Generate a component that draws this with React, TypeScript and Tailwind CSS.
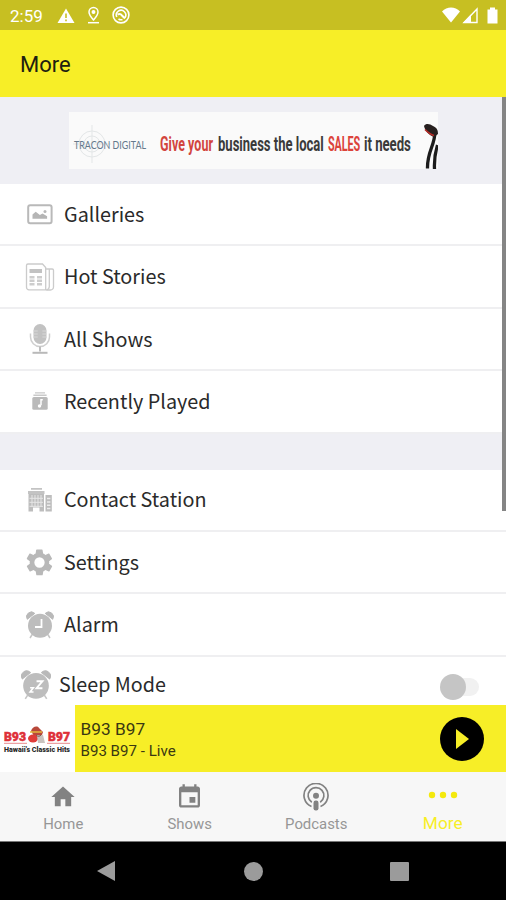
import type { ReactNode } from "react";

const GREY = "#bdbdbd";

function GalleryIcon() {
    return (
        <svg width="26" height="22" viewBox="0 0 26 22" fill="none">
            <rect x="1.2" y="2.2" width="23.4" height="18" rx="2" stroke="#b9b9b9" strokeWidth="2" />
            <path d="M5.5 15.8v-4.2l3.2-2.8 4.2 3.2 2.6-1.4 4.6 2.6v2.6z" fill="#b5b5b5" />
            <circle cx="18" cy="8.4" r="1.5" fill="#b9b9b9" />
        </svg>
    );
}

function NewsIcon() {
    return (
        <svg width="30" height="30" viewBox="0 0 30 30" fill="none" stroke="#cbcbcb" strokeWidth="1.3">
            <path d="M3 2h14.5l3.2 3.5v22.3H4a2.5 2.5 0 0 1-2.5-2.5V3.5A1.5 1.5 0 0 1 3 2z" />
            <path d="M20.7 7h6.5a1.3 1.3 0 0 1 1.3 1.3V25a3 3 0 0 1-3 3h-4.2" />
            <path d="M24.3 7v17.5a3.5 3.5 0 0 1-3 3.4" />
            <path d="M4.5 7H17v4H4.5z" fill="#c2c2c2" stroke="none" />
            <path d="M4.5 15.2h5M4.5 18.700h5M4.5 22.200h5M12 15.200h5M12 18.700h5M12 22.200h5" strokeWidth="2.5" stroke="#cdcdcd" />
        </svg>
    );
}

function MicIcon() {
    return (
        <svg width="22" height="32" viewBox="0 0 22 32" fill="none">
            <rect x="4.5" y="1" width="13" height="20" rx="6.5" fill="#c2c2c2" />
            <path d="M4.5 8h4.2M13.3 8h4.2M4.5 11h4.2M13.3 11h4.2M4.5 14h4.2M13.3 14h4.2" stroke="#d8d8d8" />
            <path d="M1.5 10.5v3.5a9.5 9.5 0 0 0 19 0v-3.5" stroke="#cfcfcf" strokeWidth="1.5" />
            <path d="M11 23.5v5" stroke={GREY} strokeWidth="2" />
            <path d="M3.5 29.8h15" stroke="#b9b9b9" strokeWidth="2" />
        </svg>
    );
}

function RecentIcon() {
    return (
        <svg width="16" height="18" viewBox="0 0 16 18">
            <path d="M3 .3h10v1.3H3zM1.4 2.6h13.2v1.5H1.4z" fill="#c9c9c9" />
            <rect x=".3" y="5" width="15.4" height="12.8" rx="1.5" fill="#bababa" />
            <path d="M10.8 7.8H9v5.5" stroke="#fff" strokeWidth="1.5" fill="none" />
            <circle cx="7.5" cy="14" r="1.7" fill="#fff" />
        </svg>
    );
}

function BuildingIcon() {
    return (
        <svg width="26" height="24" viewBox="0 0 26 24">
            <path d="M4 0h11v1.8H4zM1 3h16.5v3H1z" fill="#c3c3c3" />
            <path d="M1.5 6h15.5v17.5h-4.5V19.5H6v4H1.5z" fill={GREY} />
            <path d="M5 7v12M8 7v12M11 7v12M14 7v12M2.5 10.3h13.5M2.5 14.3h13.5M2.5 18.3h13.5" stroke="#e6e6e6" />
            <path d="M18.5 7h6.3v16.5h-6.3z" fill={GREY} />
            <path d="M20 10.5h3.4M20 14h3.4M20 17.3h3.4M20 20.5h3.4" stroke="#ececec" strokeWidth="1.4" />
        </svg>
    );
}

function GearIcon() {
    return (
        <svg width="31" height="31" viewBox="0 0 24 24" fill="#b8b8b8">
            <path d="M19.4 13c0-.3.1-.6.1-1s0-.7-.1-1l2.1-1.6c.2-.2.3-.4.1-.7l-2-3.4c-.1-.2-.4-.3-.6-.2l-2.5 1c-.5-.4-1.1-.7-1.7-1l-.4-2.6c0-.3-.2-.5-.5-.5h-4c-.2 0-.5.2-.5.4L9 5.1c-.6.2-1.1.6-1.7 1l-2.5-1c-.2-.1-.5 0-.6.2l-2 3.4c-.1.3 0 .5.2.7L4.5 11c0 .3-.1.7-.1 1s0 .7.1 1l-2.1 1.6c-.2.2-.3.4-.1.7l2 3.4c.1.2.4.3.6.2l2.5-1c.5.4 1.1.7 1.7 1l.4 2.6c0 .3.2.4.5.4h4c.3 0 .5-.1.5-.4l.4-2.6c.6-.3 1.2-.6 1.7-1l2.5 1c.2.1.5 0 .6-.2l2-3.4c.1-.2.1-.5-.1-.7zM12 16a4 4 0 1 1 0-8 4 4 0 0 1 0 8z" />
        </svg>
    );
}

function ClockIcon({ size, children }: { size: number; children: ReactNode }) {
    return (
        <svg width={size} height={size} viewBox="0 0 28 28" fill="none">
            <path d="M1.3 8.3A4.8 4.8 0 0 1 8.8 2.4zM26.7 8.3a4.8 4.8 0 0 0-7.5-5.9z" fill="#b9b9b9" stroke="#b9b9b9" strokeLinejoin="round" />
            <path d="M6.2 23.5 4 27M21.8 23.5l2.2 3.5" stroke="#c6c6c6" strokeWidth="1.5" />
            <circle cx="14" cy="14.8" r="12" fill={GREY} />
            {children}
        </svg>
    );
}

const stationRows = [
    { label: "Galleries", icon: <GalleryIcon /> },
    { label: "Hot Stories", icon: <NewsIcon /> },
    { label: "All Shows", icon: <MicIcon /> },
    { label: "Recently Played", icon: <RecentIcon /> },
];

const appRows = [
    { label: "Contact Station", icon: <BuildingIcon /> },
    { label: "Settings", icon: <GearIcon /> },
    {
        label: "Alarm",
        icon: (
            <ClockIcon size={28}>
                <path d="M15.5 8v8H9" stroke="#fff" strokeWidth="1.8" />
            </ClockIcon>
        ),
    },
];

function Row({ label, icon }: { label: string; icon: ReactNode }) {
    return (
        <div className="flex h-[62.4px] items-center border-b-2 border-[#efeff1] bg-white">
            <div className="ml-6 flex w-[31px] justify-center">{icon}</div>
            <span className="-mt-px ml-[9px] text-[19.8px] leading-none text-[#2a2a2a]">{label}</span>
        </div>
    );
}

function StatusBar() {
    return (
        <div className="flex h-[30px] shrink-0 items-center bg-[#c7bf22] pr-2 pl-[10px] text-white">
            <span className="mt-0.5 w-[35px] text-[17px] leading-none">2:59</span>
            <svg className="ml-3" width="18" height="17" viewBox="0 0 18 17">
                <path d="M9 1.5 17.5 16H.5z" fill="#fff" />
                <path d="M9 6.5V11M9 12.5v1.8" stroke="#c7bf22" strokeWidth="1.6" />
            </svg>
            <svg className="ml-3" width="13" height="18" viewBox="0 0 13 18" fill="none" stroke="#fff" strokeWidth="1.5">
                <path d="M6.5 14C3.8 11 2 8.7 2 6a4.5 4.5 0 0 1 9 0c0 2.7-1.8 5-4.5 8z" />
                <circle cx="6.5" cy="6" r="1.2" fill="#fff" />
                <path d="M1 16.7h11" />
            </svg>
            <svg className="ml-3" width="18" height="18" viewBox="0 0 18 18" fill="none" stroke="#fff">
                <circle cx="9" cy="9" r="7.9" strokeWidth="1.6" />
                <path d="M4.8 11a4.7 4.7 0 1 1 8 .8M6.5 13a4.7 4.7 0 0 0 4 .5" strokeWidth="1.6" />
                <path d="M5.5 8.5c2-1 3.5-.5 4.5 1l3 3" strokeWidth="2" />
            </svg>
            <svg className="ml-auto" width="18" height="16" viewBox="0 0 18 16" fill="#fff">
                <path d="M0 4.5C5-.7 13-.7 18 4.5l-9 11z" />
            </svg>
            <svg className="ml-0.5" width="17" height="17" viewBox="0 0 17 17" fill="none" stroke="#fff">
                <path d="M2 15.5 15 2v13.5z" strokeWidth="1.4" />
                <path d="M1 16 9 7.5V16z" fill="#fff" stroke="none" />
            </svg>
            <svg className="ml-2" width="11" height="17" viewBox="0 0 11 17" fill="#fff">
                <path d="M3 .5h5v2h2.5v14H.5v-14H3z" />
            </svg>
        </div>
    );
}

function Banner() {
    return (
        <div className="flex h-[87px] bg-[#efeff4] pt-[15px] pl-[69px]">
            <svg width="369" height="57" viewBox="69 112 369 57">
                <rect x="69" y="112" width="369" height="57" fill="#fafafa" />
                <g stroke="#e3e6e7" fill="none">
                    <circle cx="92" cy="144" r="13" />
                    <circle cx="92" cy="144" r="8" />
                    <path d="M92 125v38M73 144h38" />
                </g>
                <text x="74" y="148.5" fontSize="11" fill="#64798c" fontFamily="Lato, sans-serif" textLength="72" lengthAdjust="spacingAndGlyphs">
                    TRACON DIGITAL
                </text>
                {/* condensed slogan */}
                <g fontFamily="Roboto, sans-serif" fontSize="20" fontWeight="700" fill="#3a3a3a">
                    <text transform="translate(160 150.5) scale(.624 1)" textLength="85" fill="#d2453e">Give your</text>
                    <text transform="translate(218 150.5) scale(.653 1)" textLength="162">business the local</text>
                    <text transform="translate(328 150.5) scale(.54 1)" textLength="59.5" fill="#dc433a">SALES</text>
                    <text transform="translate(364 150.5) scale(.66 1)" textLength="71">it needs</text>
                </g>
                <path d="M435 131.5c0 14-8 20-7.5 37M437.5 145c-2.5 8-3.5 14-3 24" stroke="#1c1c1c" strokeWidth="3.3" fill="none" />
                <path d="M424 126c2-3 6-2 9 0 4 2 5 4 5 8l-4 3c-5-2-9-6-10-11z" fill="#27201f" />
                <path d="M425 129.5c3 3 5 5 9 6" stroke="#b52d28" strokeWidth="1.7" fill="none" />
            </svg>
        </div>
    );
}

function StationLogo() {
    return (
        <svg width="75" height="67" viewBox="0 705 75 67">
            <rect y="705" width="75" height="67" fill="#fff" />
            <g fontFamily="Roboto, sans-serif" fontWeight="900" fontSize="12" fill="#de3038" stroke="#de3038" strokeWidth=".5">
                <text x="4" y="741" textLength="22" lengthAdjust="spacingAndGlyphs">B93</text>
                <text x="48" y="741" textLength="22" lengthAdjust="spacingAndGlyphs">B97</text>
            </g>
            <path d="M4 743.3h23M47 743.3h23" stroke="#e88a8d" />
            <path d="M31 731c1-4 6-6 8-3l4 4-1 3-8 1z" fill="#b8483a" />
            <path d="M30 732h12" stroke="#e5b73c" strokeWidth="1.5" />
            <ellipse cx="33" cy="738.5" rx="5" ry="4" fill="#e03c38" />
            <path d="M37 735h6l2 8h-7z" fill="#c9c3bf" />
            <path d="M36 735.5c2 1 4 1 5-.5" stroke="#7a5548" fill="none" />
            <text x="4" y="751.5" fontSize="7.5" fontWeight="900" fill="#282828" fontFamily="Roboto, sans-serif" textLength="66" lengthAdjust="spacingAndGlyphs">
                Hawaii's Classic Hits
            </text>
        </svg>
    );
}

function Player() {
    return (
        <div className="flex h-[67px] shrink-0 items-center bg-[#f7ee27]">
            <StationLogo />
            <div className="mt-0.5 ml-[5.5px] flex flex-col text-[#3a3812]">
                <span className="text-[17.3px] leading-[22px]">B93 B97</span>
                <span className="text-[15.1px] leading-[22px]">B93 B97 - Live</span>
            </div>
            <button className="mr-[22px] ml-auto flex size-[44px] items-center justify-center rounded-full bg-black">
                <svg width="14" height="20" viewBox="0 0 14 20" fill="#f7ee27">
                    <path d="M1 0 14 10 1 20z" />
                </svg>
            </button>
        </div>
    );
}

function TabBar() {
    return (
        <div className="grid h-[70px] shrink-0 grid-cols-4 border-b border-[#777] bg-[#f7f7f7] text-[14.9px] leading-none text-[#969696]">
            <div className="flex flex-col items-center pt-[11px]">
                <svg width="28" height="28" viewBox="0 0 24 24" fill="#828282">
                    <path d="M10 20v-6h4v6h5v-8h3L12 3 2 12h3v8z" />
                </svg>
                <span className="mt-[6px]">Home</span>
            </div>
            <div className="flex flex-col items-center pt-[11px]">
                <svg width="29" height="28" viewBox="0 0 24 24" fill="#828282">
                    <path d="M17 12h-5v5h5v-5zM16 1v2H8V1H6v2H5c-1.1 0-2 .9-2 2v14c0 1.1.9 2 2 2h14c1.1 0 2-.9 2-2V5c0-1.1-.9-2-2-2h-1V1h-2zm3 18H5V8h14v11z" />
                </svg>
                <span className="mt-[6px]">Shows</span>
            </div>
            <div className="flex flex-col items-center pt-[11px]">
                <svg width="28" height="28" viewBox="0 0 28 28" fill="none" stroke="#828282" strokeWidth="1.7">
                    <path d="M9.5 23.5a12 12 0 1 1 9 0" />
                    <path d="M9.8 19.2a7.9 7.9 0 1 1 8.4 0" />
                    <circle cx="14" cy="12.7" r="3" fill="#828282" stroke="none" />
                    <rect x="11.5" y="17.5" width="5" height="10" rx="2.2" fill="#828282" stroke="none" />
                </svg>
                <span className="mt-[6px]">Podcasts</span>
            </div>
            <div className="flex flex-col items-center pt-[19px] text-[17.3px] text-[#f7ee27]">
                <svg width="30" height="8" viewBox="0 0 30 8" fill="#f4e90d">
                    <circle cx="4" cy="4" r="3.2" />
                    <circle cx="15" cy="4" r="3.2" />
                    <circle cx="26" cy="4" r="3.2" />
                </svg>
                <span className="mt-4">More</span>
            </div>
        </div>
    );
}

function SystemNav() {
    return (
        <div className="flex h-[58px] shrink-0 items-center justify-between bg-black pr-[97px] pl-[96px]">
            <svg width="19" height="20" viewBox="0 0 19 20" fill="#9b9b9b">
                <path d="M1 10 19 0v20z" />
            </svg>
            <div className="ml-0.5 size-[19px] rounded-full bg-[#9b9b9b]" />
            <div className="size-[19px] rounded-[1px] bg-[#9b9b9b]" />
        </div>
    );
}

export default function App() {
    return (
        <div className="flex h-[900px] w-[506px] flex-col overflow-hidden bg-white font-[Roboto,sans-serif]">
            <StatusBar />
            <header className="flex h-[67px] shrink-0 items-center bg-[#f7ee27] pl-5">
                <h1 className="mt-[3px] text-[22px] leading-none text-[#202010]">More</h1>
            </header>

            <main className="relative min-h-0 flex-1 overflow-hidden bg-white font-['Noto_Sans_CJK_SC',sans-serif]">
                <Banner />
                {stationRows.map((row) => (
                    <Row key={row.label} {...row} />
                ))}
                <div className="h-9 bg-[#efeff4]" />
                {appRows.map((row) => (
                    <Row key={row.label} {...row} />
                ))}
                <div className="flex h-[57px] items-center bg-white pl-[21px]">
                    <ClockIcon size={30}>
                        <path d="M14.5 10.5H20L14.5 17H20" stroke="#fff" strokeWidth="1.8" />
                        <path d="M8.5 16.5h3l-3 4h3.2" stroke="#fff" strokeWidth="1.5" />
                    </ClockIcon>
                    <span className="-mt-0.5 ml-2 text-[19.7px] leading-none text-[#2a2a2a]">Sleep Mode</span>
                    <div className="mt-1 mr-[27px] ml-auto flex h-[18px] w-[38px] items-center rounded-full bg-[#f1f1f1]">
                        <div className="-ml-px size-[26px] shrink-0 rounded-full bg-[#c5c5c5]" />
                    </div>
                </div>
                {/* scroll indicator */}
                <div className="absolute top-0 right-0 h-[414px] w-[4.5px] bg-[#858585]" />
            </main>

            <Player />
            <TabBar />
            <SystemNav />
        </div>
    );
}
